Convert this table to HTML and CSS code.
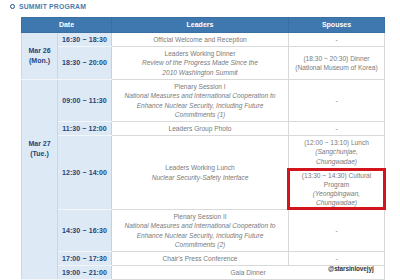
FILE: index.html
```html
<!DOCTYPE html>
<html>
<head>
<meta charset="utf-8">
<link rel="stylesheet" href="styles.css">
</head>
<body>
<div class="page">
  <h2 class="title"><span class="bullet"></span>SUMMIT PROGRAM</h2>
  <table class="prog">
    <colgroup>
      <col class="c-day"><col class="c-time"><col class="c-lead"><col class="c-sp">
    </colgroup>
    <thead>
      <tr class="r-head"><th colspan="2">Date</th><th>Leaders</th><th>Spouses</th></tr>
    </thead>
    <tbody>
      <tr class="r14">
        <td class="day" rowspan="2">Mar 26<br>(Mon.)</td>
        <td class="time">16:30 ~ 18:30</td>
        <td>Official Welcome and Reception</td>
        <td>-</td>
      </tr>
      <tr class="r33">
        <td class="time">18:30 ~ 20:00</td>
        <td>Leaders Working Dinner<br><i>Review of the Progress Made Since the<br>2010 Washington Summit</i></td>
        <td>(18:30 ~ 20:30) Dinner<br>(National Museum of Korea)</td>
      </tr>
      <tr class="r42">
        <td class="day day2" rowspan="8">Mar 27<br>(Tue.)</td>
        <td class="time">09:00 ~ 11:30</td>
        <td>Plenary Session I<br><i>National Measures and International Cooperation to<br>Enhance Nuclear Security, Including Future<br>Commitments (1)</i></td>
        <td>-</td>
      </tr>
      <tr class="r14">
        <td class="time">11:30 ~ 12:00</td>
        <td>Leaders Group Photo</td>
        <td>-</td>
      </tr>
      <tr class="r33">
        <td class="time" rowspan="2">12:30 ~ 14:00</td>
        <td rowspan="2">Leaders Working Lunch<br><i>Nuclear Security-Safety Interface</i></td>
        <td>(12:00 ~ 13:10) Lunch<br><i>(Sangchunjae,<br>Chungwadae)</i></td>
      </tr>
      <tr class="r41">
        <td class="marked">(13:30 ~ 14:30) Cultural<br>Program<br><i>(Yeongbingwan,<br>Chungwadae)</i></td>
      </tr>
      <tr class="r42">
        <td class="time">14:30 ~ 16:30</td>
        <td>Plenary Session II<br><i>National Measures and International Cooperation to<br>Enhance Nuclear Security, Including Future<br>Commitments (2)</i></td>
        <td>-</td>
      </tr>
      <tr class="r14">
        <td class="time">17:00 ~ 17:30</td>
        <td>Chair's Press Conference</td>
        <td>-</td>
      </tr>
      <tr class="r14">
        <td class="time">19:00 ~ 21:00</td>
        <td colspan="2">Gala Dinner</td>
      </tr>
    </tbody>
  </table>
  <div class="watermark">@starsinlovejyj</div>
</div>
</body>
</html>
```
FILE: styles.css
```css
html, body {
  margin: 0;
  padding: 0;
  background: #ffffff;
}
body {
  font-family: "Liberation Sans", Arial, sans-serif;
}
.page {
  position: relative;
  width: 400px;
  height: 280px;
  overflow: hidden;
}
.title {
  margin: 0;
  padding: 1px 0 0 10px;
  height: 12px;
  box-sizing: border-box;
  display: flex;
  align-items: center;
  gap: 4px;
  font-size: 6.8px;
  font-weight: bold;
  color: #4a7aab;
  letter-spacing: 0.2px;
  line-height: 8px;
}
.bullet {
  width: 5px;
  height: 5px;
  box-sizing: border-box;
  border: 1.6px solid #1f4f86;
  border-radius: 50%;
}
.prog {
  margin: 5px 0 0 21px;
  width: 363px;
  border-collapse: collapse;
  table-layout: fixed;
  font-size: 6.6px;
  line-height: 9.2px;
  color: #7a7a7a;
}
.c-day { width: 36px; }
.c-time { width: 54px; }
.c-lead { width: 177px; }
.c-sp { width: 96px; }
.prog th {
  background: #3f78ae;
  color: #ffffff;
  font-weight: bold;
  font-size: 7px;
  height: 14px;
  padding: 0;
  border: 1px solid #3a6fa2;
  border-left: 1px solid #8fb0d0;
}
.prog th:first-child { border-left: 1px solid #3a6fa2; }
.prog td {
  padding: 0;
  text-align: center;
  vertical-align: middle;
  border: 1px solid #d9d9d9;
  white-space: nowrap;
}
.prog i { font-style: italic; }
.prog td.day,
.prog td.time {
  background: #dde9f4;
  color: #24457a;
  font-weight: bold;
  font-size: 7px;
  border-color: #c9d6e3;
}
.prog td.time {
  letter-spacing: 0.1px;
  border-top-color: #f2f6fa;
  border-bottom-color: #f2f6fa;
  border-left-color: #c9d6e3;
  border-right-color: #cfcfcf;
}
.prog td.day {
  line-height: 10px;
  border-bottom-color: #f2f6fa;
}
.prog td.day2 {
  vertical-align: top;
  padding-top: 59px;
}
.r14 { height: 14px; }
.r33 { height: 33px; }
.r41 { height: 41px; }
.r42 { height: 42px; }
.prog td.marked {
  position: relative;
}
.prog td.marked::after {
  content: "";
  position: absolute;
  left: -2px;
  right: -2px;
  top: -1px;
  bottom: -1px;
  border: 3px solid #d2141c;
}
.watermark {
  position: absolute;
  left: 328px;
  top: 265px;
  font-size: 6.4px;
  font-weight: bold;
  color: #333333;
  letter-spacing: -0.1px;
}
```
